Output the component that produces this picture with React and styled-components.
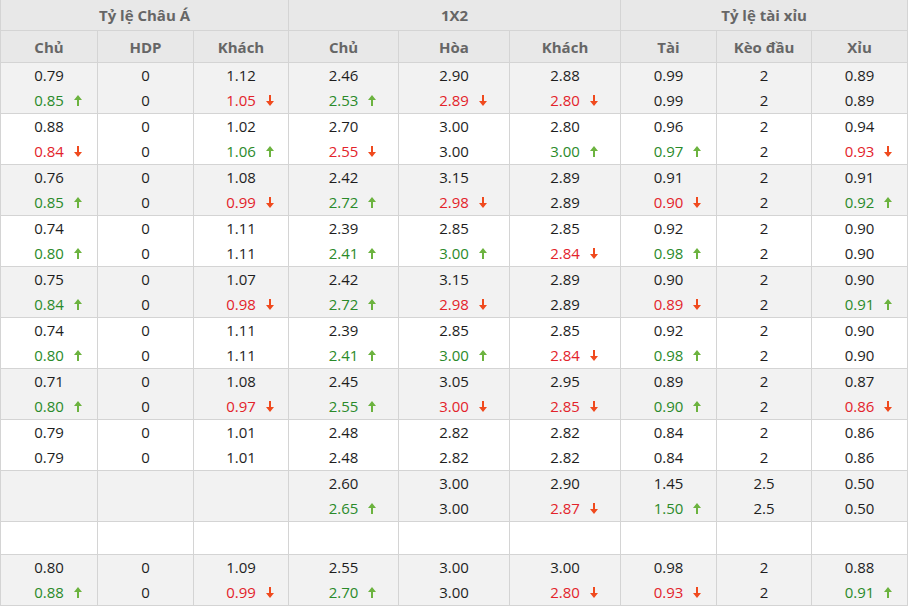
import React from "react";
import styled, { createGlobalStyle } from "styled-components";

const Global = createGlobalStyle`
  html, body { margin: 0; padding: 0; background: #fff; }
  body { font-family: "Open Sans", "Noto Sans", Arial, sans-serif; }
`;

const Table = styled.table`
  border-collapse: collapse;
  table-layout: fixed;
  width: 907px;
  font-size: 15px;
  color: #1e1e1e;
`;

const HeadCell = styled.th`
  background: #e8e8e8;
  color: #666;
  font-weight: 700;
  font-size: 15px;
  height: ${(p) => p.$h}px;
  padding: 0;
  border: 1px solid #d4d4d4;
  border-top: none;
  text-align: center;
  vertical-align: middle;
`;

const Row = styled.tr`
  background: ${(p) => (p.$alt ? "#f2f2f2" : "#ffffff")};
`;

const Cell = styled.td`
  border: 1px solid #d4d4d4;
  padding: 0;
  height: ${(p) => p.$h}px;
  text-align: center;
  vertical-align: middle;
`;

const Line = styled.div`
  height: 25px;
  line-height: 25px;
  display: flex;
  justify-content: center;
`;

const Num = styled.span`
  position: relative;
  color: ${(p) => (p.$dir === "u" ? "#2a8a2a" : p.$dir === "d" ? "#e3232b" : "#1e1e1e")};
`;

const Arrow = styled.svg`
  position: absolute;
  left: calc(100% + 10px);
  top: 7px;
  width: 8px;
  height: 11px;
`;

const ArrowIcon = ({ dir }) => (
  <Arrow viewBox="0 0 8 11">
    {dir === "u" ? (
      <path d="M4 0 L8 5 H5 V11 H3 V5 H0 Z" fill="#6cb33f" />
    ) : (
      <path d="M4 11 L8 6 H5 V0 H3 V6 H0 Z" fill="#f04a1e" />
    )}
  </Arrow>
);

const Value = ({ text, dir }) => (
  <Line>
    <Num $dir={dir}>
      {text}
      {dir && <ArrowIcon dir={dir} />}
    </Num>
  </Line>
);

const parse = (s) => {
  if (!s) return null;
  const [a, b] = s.split("/");
  const m = b.match(/^([\d.]+)([ud]?)$/);
  return { a, b: m[1], dir: m[2] || null };
};

const rows = [
  "0.79/0.85u 0/0 1.12/1.05d 2.46/2.53u 2.90/2.89d 2.88/2.80d 0.99/0.99 2/2 0.89/0.89",
  "0.88/0.84d 0/0 1.02/1.06u 2.70/2.55d 3.00/3.00 2.80/3.00u 0.96/0.97u 2/2 0.94/0.93d",
  "0.76/0.85u 0/0 1.08/0.99d 2.42/2.72u 3.15/2.98d 2.89/2.89 0.91/0.90d 2/2 0.91/0.92u",
  "0.74/0.80u 0/0 1.11/1.11 2.39/2.41u 2.85/3.00u 2.85/2.84d 0.92/0.98u 2/2 0.90/0.90",
  "0.75/0.84u 0/0 1.07/0.98d 2.42/2.72u 3.15/2.98d 2.89/2.89 0.90/0.89d 2/2 0.90/0.91u",
  "0.74/0.80u 0/0 1.11/1.11 2.39/2.41u 2.85/3.00u 2.85/2.84d 0.92/0.98u 2/2 0.90/0.90",
  "0.71/0.80u 0/0 1.08/0.97d 2.45/2.55u 3.05/3.00d 2.95/2.85d 0.89/0.90u 2/2 0.87/0.86d",
  "0.79/0.79 0/0 1.01/1.01 2.48/2.48 2.82/2.82 2.82/2.82 0.84/0.84 2/2 0.86/0.86",
  "- - - 2.60/2.65u 3.00/3.00 2.90/2.87d 1.45/1.50u 2.5/2.5 0.50/0.50",
  "EMPTY",
  "0.80/0.88u 0/0 1.09/0.99d 2.55/2.70u 3.00/3.00 3.00/2.80d 0.98/0.93d 2/2 0.88/0.91u",
];

const widths = [97, 96, 95, 110, 111, 111, 96, 95, 96];
const subHeads = ["Chủ", "HDP", "Khách", "Chủ", "Hòa", "Khách", "Tài", "Kèo đầu", "Xỉu"];

export default function App() {
  return (
    <>
      <Global />
      <Table>
        <colgroup>
          {widths.map((w, i) => (
            <col key={i} style={{ width: w }} />
          ))}
        </colgroup>
        <thead>
          <tr>
            <HeadCell colSpan={3} $h={30}>Tỷ lệ Châu Á</HeadCell>
            <HeadCell colSpan={3} $h={30}>1X2</HeadCell>
            <HeadCell colSpan={3} $h={30}>Tỷ lệ tài xỉu</HeadCell>
          </tr>
          <tr>
            {subHeads.map((h, i) => (
              <HeadCell key={i} $h={31}>{h}</HeadCell>
            ))}
          </tr>
        </thead>
        <tbody>
          {rows.map((r, ri) => {
            const alt = ri % 2 === 0;
            if (r === "EMPTY") {
              return (
                <Row key={ri} $alt={alt}>
                  {widths.map((_, ci) => (
                    <Cell key={ci} $h={32} />
                  ))}
                </Row>
              );
            }
            const cells = r.split(" ");
            return (
              <Row key={ri} $alt={alt}>
                {cells.map((c, ci) => {
                  const v = c === "-" ? null : parse(c);
                  return (
                    <Cell key={ci} $h={50}>
                      {v && (
                        <>
                          <Value text={v.a} />
                          <Value text={v.b} dir={v.dir} />
                        </>
                      )}
                    </Cell>
                  );
                })}
              </Row>
            );
          })}
        </tbody>
      </Table>
    </>
  );
}
